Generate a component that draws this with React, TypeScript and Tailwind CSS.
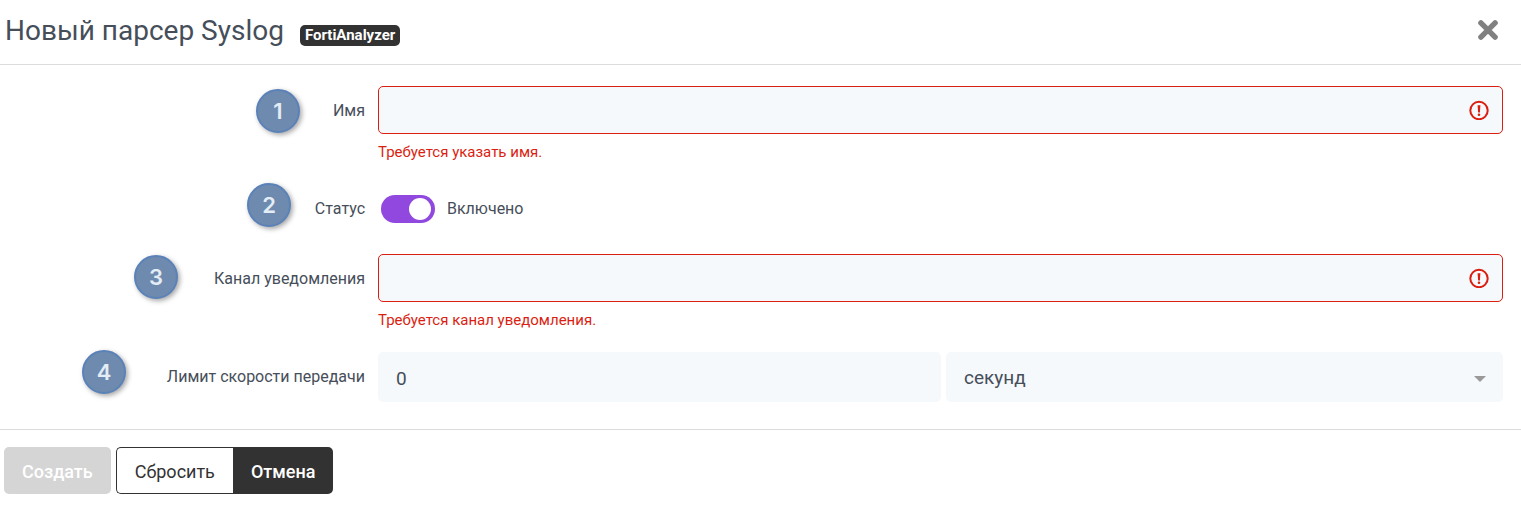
import { useState } from "react";
import type { ReactNode } from "react";

const markers = [
  { number: 1, position: "left-[256px] top-6" },
  { number: 2, position: "left-[247px] top-[118px]" },
  { number: 3, position: "left-[134px] top-[190px]" },
  { number: 4, position: "left-[82px] top-[285px]" },
];

function CloseIcon() {
  return (
    <svg viewBox="0 0 20 20" className="w-5 h-5" fill="none" stroke="#808080" strokeWidth="5.4" strokeLinecap="round" aria-hidden="true">
      <path d="M2.9 2.9 17.1 17.1M17.1 2.9 2.9 17.1" />
    </svg>
  );
}

function ErrorIcon() {
  return (
    <svg viewBox="0 0 20 20" className="absolute right-3.5 top-3.5 w-5 h-5 pointer-events-none" aria-hidden="true">
      <circle cx="10" cy="10.5" r="8.7" fill="none" stroke="#da1e12" strokeWidth="2" />
      <path d="M8.6 5.2h2.8l-.5 7.2H9.1z" fill="#da1e12" />
      <circle cx="10" cy="14.8" r="1.3" fill="#da1e12" />
    </svg>
  );
}

function Row({ label, htmlFor, children }: { label: string; htmlFor: string; children: ReactNode }) {
  return (
    <div className="grid grid-cols-[365px_1fr] gap-x-[13px] items-start">
      <label htmlFor={htmlFor} className="text-right leading-[50px]">
        {label}
      </label>
      <div>{children}</div>
    </div>
  );
}

function RequiredInput({ id, error }: { id: string; error: string }) {
  return (
    <>
      <div className="relative">
        <input
          id={id}
          type="text"
          aria-invalid="true"
          aria-describedby={`${id}-error`}
          className="block w-full h-12 px-[18px] pr-12 rounded-[5px] border border-[#da1e12] bg-[#f5f9fc] text-lg outline-none"
        />
        <ErrorIcon />
      </div>
      <p id={`${id}-error`} className="mt-1.5 text-[15px] leading-6 text-[#da1e12]">{error}</p>
    </>
  );
}

export default function App() {
  const [enabled, setEnabled] = useState(true);

  return (
    <div className="bg-white text-[#464e5a] text-base font-['Roboto',sans-serif]">
      <header className="flex items-center justify-between h-[65px] pl-[5px] pr-[23px] pb-1 border-b border-[#dcdcdc]">
        <div className="flex items-center gap-4">
          <h1 className="pt-0.5 text-[28px] leading-9">Новый парсер Syslog</h1>
          <span className="mt-2.5 px-[5px] rounded-[5px] bg-[#323232] text-white text-[15px] leading-[21px] font-bold">FortiAnalyzer</span>
        </div>
        <button type="button" aria-label="Закрыть">
          <CloseIcon />
        </button>
      </header>

      <form>
        <div className="relative flex flex-col gap-5 pt-[21px] pb-[27px] pr-[18px]">
          <Row label="Имя" htmlFor="name">
            <RequiredInput id="name" error="Требуется указать имя." />
          </Row>

          <Row label="Статус" htmlFor="status">
            <label className="flex items-center gap-3 h-[50px] pl-[3px]">
              <input
                id="status"
                type="checkbox"
                role="switch"
                checked={enabled}
                onChange={(e) => setEnabled(e.target.checked)}
                className="peer sr-only"
              />
              <span className="flex items-center justify-start peer-checked:justify-end w-[54px] h-7 px-1 rounded-full bg-gray-400 peer-checked:bg-[#9048df]">
                <span className="w-[22px] h-[22px] rounded-full bg-white" />
              </span>
              <span>{enabled ? "Включено" : "Отключено"}</span>
            </label>
          </Row>

          <Row label="Канал уведомления" htmlFor="channel">
            <RequiredInput id="channel" error="Требуется канал уведомления." />
          </Row>

          <Row label="Лимит скорости передачи" htmlFor="limit">
            <div className="grid grid-cols-[563px_1fr] gap-[5px]">
              <input id="limit" type="text" defaultValue="0" className="w-full h-[50px] px-[18px] pt-0.5 rounded-[5px] bg-[#f5f9fc] text-[19px] outline-none" />
              <div className="relative">
                <select aria-label="Единица времени" className="appearance-none w-full h-[50px] px-[18px] pt-0.5 rounded-[5px] bg-[#f5f9fc] text-[19px] outline-none">
                  <option>секунд</option>
                  <option>минут</option>
                </select>
                <svg viewBox="0 0 12 6" className="absolute right-[17px] top-6 w-3 h-1.5 pointer-events-none" aria-hidden="true">
                  <path d="M0 0h12L6 6z" fill="#999" />
                </svg>
              </div>
            </div>
          </Row>

          {markers.map((marker) => (
            <span
              key={marker.number}
              className={`absolute ${marker.position} flex items-center justify-center w-11 h-11 rounded-full border-2 border-[#5b82b8] bg-[#6e8aae] text-[#e4ecf5] text-[22px] leading-none font-semibold font-['Inter',sans-serif] shadow-[2px_2px_5px_rgba(0,0,0,0.35)]`}
            >
              {marker.number}
            </span>
          ))}
        </div>

        <footer className="flex gap-[5px] pt-[17px] pb-3.5 pl-1 border-t border-[#dcdcdc] text-lg">
          <button type="button" disabled className="h-[47px] px-[18px] pt-0.5 rounded-[5px] bg-[#d5d5d5] text-white font-medium">Создать</button>
          <div className="flex">
            <button type="reset" className="h-[47px] px-[18px] pt-0.5 rounded-l-[5px] border border-r-0 border-[#323232] text-[#323232]">Сбросить</button>
            <button type="button" className="h-[47px] px-[18px] pt-0.5 rounded-r-[5px] bg-[#323232] text-white font-medium">Отмена</button>
          </div>
        </footer>
      </form>
    </div>
  );
}
